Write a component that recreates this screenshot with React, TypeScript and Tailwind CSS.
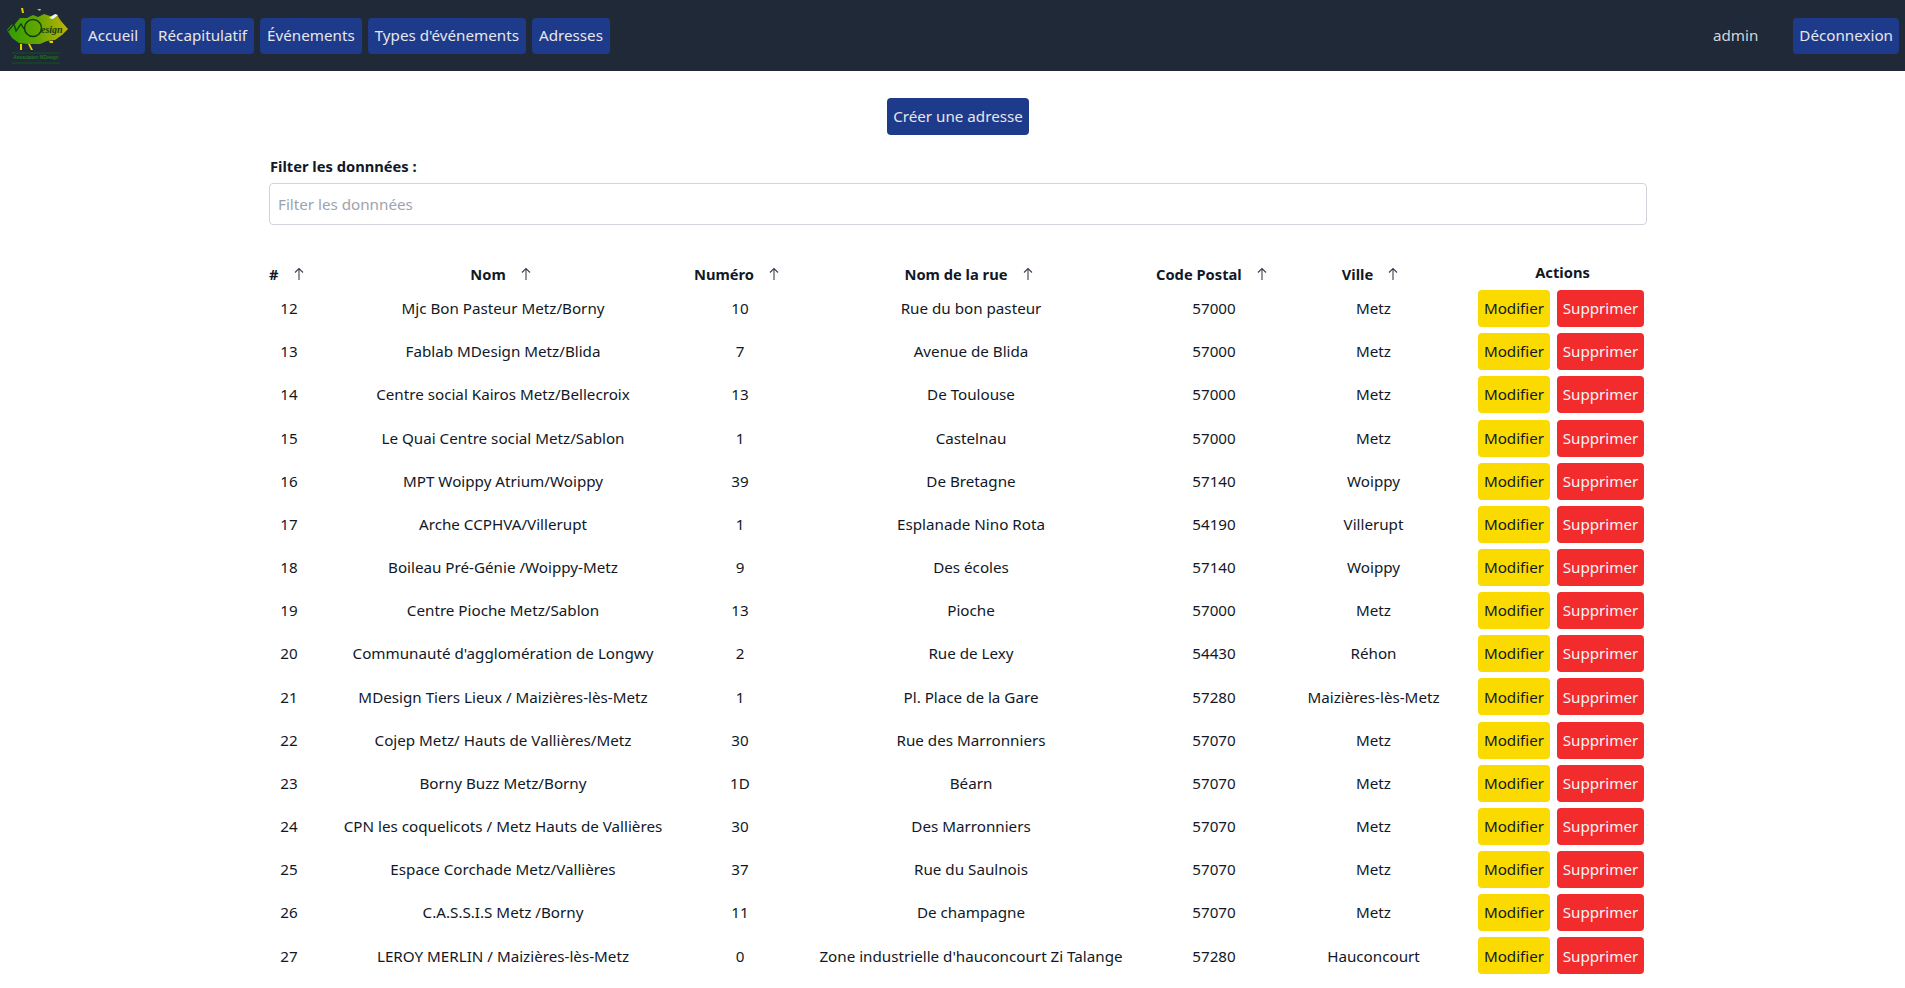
import React from 'react';

const rows = [
  { id: 12, nom: 'Mjc Bon Pasteur Metz/Borny', numero: '10', rue: 'Rue du bon pasteur', cp: '57000', ville: 'Metz' },
  { id: 13, nom: 'Fablab MDesign Metz/Blida', numero: '7', rue: 'Avenue de Blida', cp: '57000', ville: 'Metz' },
  { id: 14, nom: 'Centre social Kairos Metz/Bellecroix', numero: '13', rue: 'De Toulouse', cp: '57000', ville: 'Metz' },
  { id: 15, nom: 'Le Quai Centre social Metz/Sablon', numero: '1', rue: 'Castelnau', cp: '57000', ville: 'Metz' },
  { id: 16, nom: 'MPT Woippy Atrium/Woippy', numero: '39', rue: 'De Bretagne', cp: '57140', ville: 'Woippy' },
  { id: 17, nom: 'Arche CCPHVA/Villerupt', numero: '1', rue: 'Esplanade Nino Rota', cp: '54190', ville: 'Villerupt' },
  { id: 18, nom: 'Boileau Pré-Génie /Woippy-Metz', numero: '9', rue: 'Des écoles', cp: '57140', ville: 'Woippy' },
  { id: 19, nom: 'Centre Pioche Metz/Sablon', numero: '13', rue: 'Pioche', cp: '57000', ville: 'Metz' },
  { id: 20, nom: "Communauté d'agglomération de Longwy", numero: '2', rue: 'Rue de Lexy', cp: '54430', ville: 'Réhon' },
  { id: 21, nom: 'MDesign Tiers Lieux / Maizières-lès-Metz', numero: '1', rue: 'Pl. Place de la Gare', cp: '57280', ville: 'Maizières-lès-Metz' },
  { id: 22, nom: 'Cojep Metz/ Hauts de Vallières/Metz', numero: '30', rue: 'Rue des Marronniers', cp: '57070', ville: 'Metz' },
  { id: 23, nom: 'Borny Buzz Metz/Borny', numero: '1D', rue: 'Béarn', cp: '57070', ville: 'Metz' },
  { id: 24, nom: 'CPN les coquelicots / Metz Hauts de Vallières', numero: '30', rue: 'Des Marronniers', cp: '57070', ville: 'Metz' },
  { id: 25, nom: 'Espace Corchade Metz/Vallières', numero: '37', rue: 'Rue du Saulnois', cp: '57070', ville: 'Metz' },
  { id: 26, nom: 'C.A.S.S.I.S Metz /Borny', numero: '11', rue: 'De champagne', cp: '57070', ville: 'Metz' },
  { id: 27, nom: 'LEROY MERLIN / Maizières-lès-Metz', numero: '0', rue: "Zone industrielle d'hauconcourt Zi Talange", cp: '57280', ville: 'Hauconcourt' },
];

const navLinks = ['Accueil', 'Récapitulatif', 'Événements', "Types d'événements", 'Adresses'];

const Logo = () => (
  <svg width="75" height="68" viewBox="0 2 75 68" className="shrink-0">
    <defs>
      <linearGradient id="leaf" x1="0" x2="1" y1="0" y2="0">
        <stop offset="0" stopColor="#2f9c04" />
        <stop offset="0.5" stopColor="#62a600" />
        <stop offset="1" stopColor="#c4b200" />
      </linearGradient>
    </defs>
    <path d="M7 30 L11 25 L15 24 L20 18 L27 18 L33 15 L38 17 L44 14 L50 16 L57 15 L61 21 L68 29 L62 35 L55 40 L47 41 L40 44 L28 44 L19 43 L12 38 Z" fill="url(#leaf)" />
    <path d="M49 18 L55 14 L58 15 L53 19 Z" fill="#f5f5f5" />
    <path d="M21 8 L23 8 L24 13 L22 13 Z M20 44 L22 44 L22 50 L20 50 Z M28 44 L30 44 L33 50 L31 50 Z M49 41 L53 41 L53 43 L50 43 Z M37 9 L41 9 L40 11 Z" fill="#e8d000" />
    <path d="M8 31 L14 24 L16 31 L21 24 L24 29" fill="none" stroke="#123c10" strokeWidth="1.3" />
    <circle cx="33" cy="28" r="8.5" fill="none" stroke="#123c10" strokeWidth="1.5" />
    <text x="41" y="33" fontFamily="'Liberation Serif', serif" fontStyle="italic" fontWeight="700" fontSize="10" fill="#123c10">esign</text>
    <path d="M12 53 H60 M12 63 H60" stroke="#136b10" strokeWidth="0.6" />
    <text x="36" y="59" textAnchor="middle" fontFamily="'Liberation Sans', sans-serif" fontSize="4.8" fill="#1f8a14">Association MDesign</text>
  </svg>
);

const ArrowUp = () => (
  <svg width="10" height="14" viewBox="0 0 10 14" className="shrink-0 mx-[5px]" fill="none" stroke="#374151" strokeWidth="1.1">
    <path d="M5 13 V1.5 M1 5.5 L5 1.5 L9 5.5" />
  </svg>
);

const SortHeader = ({ label, className = '' }: { label: string; className?: string }) => (
  <span className={`inline-flex items-center font-bold whitespace-nowrap text-[14.7px] ${className}`}>
    {label}
    <span className="w-[10px]" />
    <ArrowUp />
  </span>
);

export default function App() {
  return (
    <div className="min-h-[988px] bg-white text-[#111827] font-['Noto_Sans',sans-serif] text-[15.2px]">
      <nav className="h-[71px] bg-[#1f2937] flex items-center justify-between pr-[6px]">
        <div className="flex items-center">
          <Logo />
          <div className="flex gap-[6px] ml-[6px]">
            {navLinks.map(l => (
              <a key={l} className="h-[36px] px-[7px] flex items-center rounded bg-[#1e3a8a] text-[#e5e7eb]">{l}</a>
            ))}
          </div>
        </div>
        <div className="flex items-center gap-[35px]">
          <span className="text-[#d1d5db]">admin</span>
          <a className="h-[36px] px-[6px] flex items-center rounded bg-[#1e3a8a] text-[#e5e7eb]">Déconnexion</a>
        </div>
      </nav>

      <div className="flex justify-center pt-[27px] pl-[11px]">
        <button className="h-[37px] px-[6px] rounded bg-[#1e3a8a] text-[#e5e7eb]">Créer une adresse</button>
      </div>

      <div className="w-[1378px] ml-[269px] mt-[20px]">
        <label className="block pl-[1px] font-bold text-[14.7px] leading-[22px]">Filter les donnnées :</label>
        <input
          placeholder="Filter les donnnées"
          className="mt-[6px] w-full h-[42px] px-2 rounded border border-[#d1d5db] outline-none placeholder:text-[#9ca3af]"
        />

        <table className="mt-[36px] w-full table-fixed border-collapse">
          <colgroup>
            <col className="w-[40px]" />
            <col className="w-[388px]" />
            <col className="w-[86px]" />
            <col className="w-[376px]" />
            <col className="w-[110px]" />
            <col className="w-[209px]" />
            <col className="w-[169px]" />
          </colgroup>
          <thead>
            <tr className="h-[26px]">
              <th className="text-left pt-[1px]"><SortHeader label="#" /></th>
              <th className="pt-[1px]"><SortHeader label="Nom" /></th>
              <th className="pt-[1px]"><SortHeader label="Numéro" className="ml-[-3px]" /></th>
              <th className="pt-[1px]"><SortHeader label="Nom de la rue" /></th>
              <th className="pt-[1px]"><SortHeader label="Code Postal" className="ml-[-3px]" /></th>
              <th className="pt-[1px]"><SortHeader label="Ville" className="ml-[-2px]" /></th>
              <th className="font-bold align-top text-[14.7px]">Actions</th>
            </tr>
          </thead>
          <tbody>
            {rows.map(r => (
              <tr key={r.id} className="h-[43.17px] text-center">
                <td>{r.id}</td>
                <td className="whitespace-nowrap">{r.nom}</td>
                <td>{r.numero}</td>
                <td className="whitespace-nowrap">{r.rue}</td>
                <td>{r.cp}</td>
                <td className="whitespace-nowrap">{r.ville}</td>
                <td>
                  <div className="flex justify-end gap-[7px] pr-[3px]">
                    <button className="h-[37px] w-[72px] rounded bg-[#fbda00] text-[#111827]">Modifier</button>
                    <button className="h-[37px] w-[87px] rounded bg-[#f22c2c] text-[#f3f4f6]">Supprimer</button>
                  </div>
                </td>
              </tr>
            ))}
          </tbody>
        </table>
      </div>
    </div>
  );
}
